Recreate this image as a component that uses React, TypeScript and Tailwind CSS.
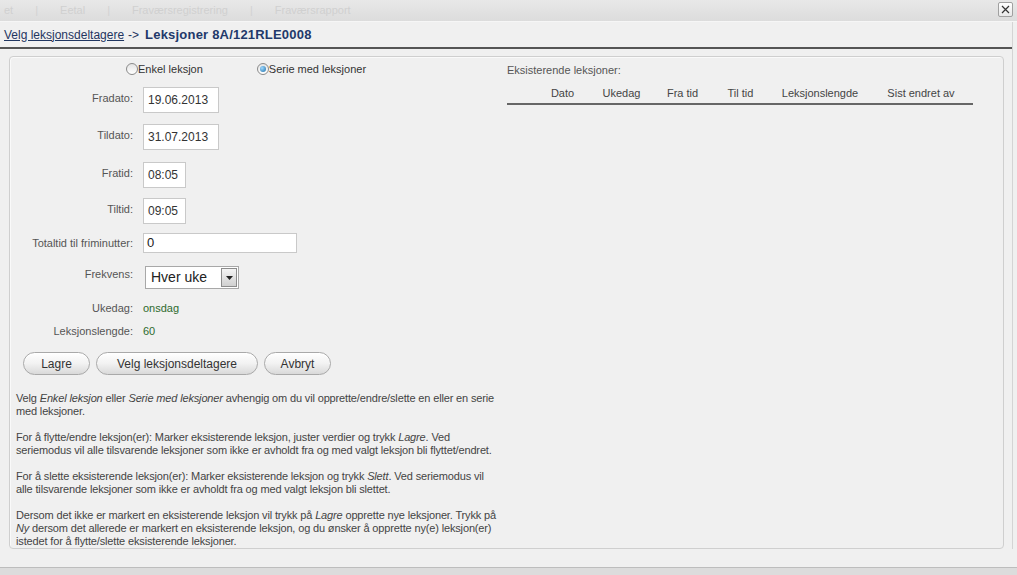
import React from "react";

const F = { fontFamily: '"Liberation Sans", Arial, sans-serif' };

function Radio({ checked }: { checked?: boolean }) {
  return (
    <span className="inline-flex h-[12px] w-[12px] items-center justify-center rounded-full border border-[#8a8a8a] bg-gradient-to-b from-[#e4e4e4] to-[#ffffff]">
      {checked && <span className="h-[6px] w-[6px] rounded-full bg-[radial-gradient(circle_at_35%_35%,#9fd8ff,#1b6fa8)]" />}
    </span>
  );
}

function Label({ children }: { children: React.ReactNode }) {
  return <div className="w-[124px] shrink-0 pr-[1px] text-right text-[11px] text-[#555]">{children}</div>;
}

function Input({ value, w }: { value: string; w: string }) {
  return (
    <div className={`${w} flex h-[26px] items-center border border-[#c9c9c9] bg-white pl-[4px] text-[12px] text-[#333]`}>{value}</div>
  );
}

function Btn({ children, w }: { children: React.ReactNode; w: string }) {
  return (
    <div className={`${w} flex h-[23px] items-center justify-center rounded-full border border-[#a9a9a9] bg-gradient-to-b from-[#ffffff] via-[#f2f2f2] to-[#d9d9d9] text-[12px] text-[#333] shadow-[inset_0_1px_0_#fff]`}>
      {children}
    </div>
  );
}

export default function App() {
  return (
    <div className="relative h-[575px] w-[1017px] overflow-hidden bg-[#f0f0f0]" style={F}>
      {/* top faded tab strip */}
      <div className="flex h-[22px] items-center gap-[22px] border-b border-[#f6f6f6] bg-gradient-to-b from-[#e8e8e8] to-[#dcdcdc] pl-[4px] text-[11px] text-[#d0d0d0]">
        <span>et</span>
        <span className="text-[#d2d2d2]">|</span>
        <span>Eetal</span>
        <span className="text-[#d2d2d2]">|</span>
        <span>Fraværsregistrering</span>
        <span className="text-[#d2d2d2]">|</span>
        <span>Fraværsrapport</span>
      </div>
      <div className="absolute right-[4px] top-[2px] flex h-[15px] w-[15px] items-center justify-center rounded-[2px] border border-[#a0a0a0] bg-gradient-to-b from-white to-[#e8e8e8]">
        <svg width="9" height="9" viewBox="0 0 9 9">
          <path d="M1 1L8 8M8 1L1 8" stroke="#333" strokeWidth="1.2" />
        </svg>
      </div>

      <div className="mr-[4px] border-r border-[#d4d4d4]">
        {/* breadcrumb */}
        <div className="flex h-[27px] items-center border-b-2 border-[#555] pl-[4px] text-[12px]">
          <span className="text-[#1f3560] underline">Velg leksjonsdeltagere</span>
          <span className="ml-[4px] text-[#1f3560]">-&gt;</span>
          <span className="ml-[6px] text-[13px] font-bold tracking-[0.2px] text-[#22396a]">Leksjoner 8A/121RLE0008</span>
        </div>

        {/* panel */}
        <div className="ml-[9px] mr-[8px] mt-[7px] flex h-[493px] rounded-[4px] border border-[#cfcfcf] bg-[#f0f0f0] shadow-[inset_1px_1px_0_#fafafa]">
          {/* left */}
          <div className="w-[497px] shrink-0">
            <div className="mt-[5px] flex h-[14px] items-center text-[11px] text-[#333]">
              <div className="ml-[116px] flex items-center">
                <Radio />
                <span>Enkel leksjon</span>
              </div>
              <div className="ml-[54px] flex items-center">
                <Radio checked />
                <span>Serie med leksjoner</span>
              </div>
            </div>

            <div className="mt-[11px] flex">
              <Label><div className="pt-[3px]">Fradato:</div></Label>
              <div className="ml-[9px]"><Input value="19.06.2013" w="w-[76px]" /></div>
            </div>
            <div className="mt-[11px] flex">
              <Label><div className="pt-[3px]">Tildato:</div></Label>
              <div className="ml-[9px]"><Input value="31.07.2013" w="w-[76px]" /></div>
            </div>
            <div className="mt-[12px] flex">
              <Label><div className="pt-[3px]">Fratid:</div></Label>
              <div className="ml-[9px]"><Input value="08:05" w="w-[43px]" /></div>
            </div>
            <div className="mt-[10px] flex">
              <Label><div className="pt-[3px]">Tiltid:</div></Label>
              <div className="ml-[9px]"><Input value="09:05" w="w-[43px]" /></div>
            </div>
            <div className="mt-[9px] flex">
              <Label><div className="pt-[2px]">Totaltid til friminutter:</div></Label>
              <div className="ml-[9px] flex h-[20px] w-[154px] items-center border border-[#c9c9c9] bg-white pl-[3px] text-[13px] text-[#222]">0</div>
            </div>
            <div className="mt-[13px] flex">
              <Label><div className="pt-[0px]">Frekvens:</div></Label>
              <div className="ml-[11px] flex h-[23px] w-[94px] items-center justify-between border border-[#a8a8a8] bg-white pl-[5px] pr-[1px] text-[14px] text-[#222]">
                <span>Hver uke</span>
                <span className="flex h-[19px] w-[16px] items-center justify-center border border-[#8c8c8c] bg-gradient-to-b from-[#f4f4f4] to-[#d0d0d0]">
                  <svg width="7" height="4" viewBox="0 0 7 4"><path d="M0 0H7L3.5 4Z" fill="#222" /></svg>
                </span>
              </div>
            </div>
            <div className="mt-[11px] flex text-[11px]">
              <Label>Ukedag:</Label>
              <div className="ml-[9px] text-[#2e6b2e]">onsdag</div>
            </div>
            <div className="mt-[6px] flex text-[11px]">
              <Label>Leksjonslengde:</Label>
              <div className="ml-[9px] text-[#2e6b2e]">60</div>
            </div>

            <div className="ml-[13px] mt-[13px] flex gap-[6px]">
              <Btn w="w-[67px]">Lagre</Btn>
              <Btn w="w-[162px]">Velg leksjonsdeltagere</Btn>
              <Btn w="w-[67px]">Avbryt</Btn>
            </div>

            <div className="ml-[6px] mt-[17px] flex flex-col gap-[13px] whitespace-nowrap text-[11px] leading-[13px] tracking-[-0.15px] text-[#444]">
              <p>
                Velg <i>Enkel leksjon</i> eller <i>Serie med leksjoner</i> avhengig om du vil opprette/endre/slette en eller en serie
                <br />
                med leksjoner.
              </p>
              <p>
                For å flytte/endre leksjon(er): Marker eksisterende leksjon, juster verdier og trykk <i>Lagre</i>. Ved
                <br />
                seriemodus vil alle tilsvarende leksjoner som ikke er avholdt fra og med valgt leksjon bli flyttet/endret.
              </p>
              <p>
                For å slette eksisterende leksjon(er): Marker eksisterende leksjon og trykk <i>Slett</i>. Ved seriemodus vil
                <br />
                alle tilsvarende leksjoner som ikke er avholdt fra og med valgt leksjon bli slettet.
              </p>
              <p>
                Dersom det ikke er markert en eksisterende leksjon vil trykk på <i>Lagre</i> opprette nye leksjoner. Trykk på
                <br />
                <i>Ny</i> dersom det allerede er markert en eksisterende leksjon, og du ønsker å opprette ny(e) leksjon(er)
                <br />
                istedet for å flytte/slette eksisterende leksjoner.
              </p>
            </div>
          </div>

          {/* right */}
          <div className="flex-1 pt-[5px] text-[11px] text-[#555]">
            <div className="h-[14px]">Eksisterende leksjoner:</div>
            <div className="mt-[9px] flex w-[466px] border-b-2 border-[#666] pb-[1px] text-center text-[#444]">
              <div className="w-[26px]" />
              <div className="w-[59px]">Dato</div>
              <div className="w-[59px]">Ukedag</div>
              <div className="w-[63px]">Fra tid</div>
              <div className="w-[53px]">Til tid</div>
              <div className="w-[106px]">Leksjonslengde</div>
              <div className="w-[96px]">Sist endret av</div>
            </div>
          </div>
        </div>
      </div>

      {/* bottom strip */}
      <div className="absolute bottom-0 left-0 right-0 h-[8px] border-t border-[#bdbdbd] bg-[#dcdcdc]" />
    </div>
  );
}
